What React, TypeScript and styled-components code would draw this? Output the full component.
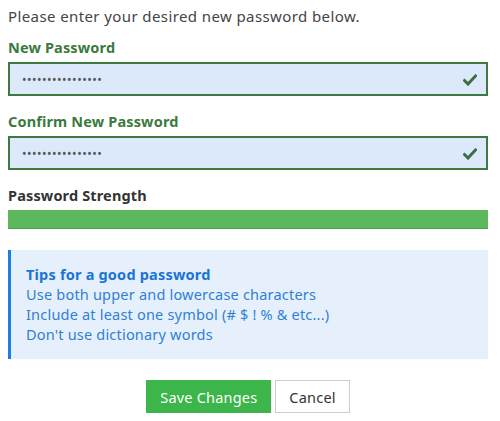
import React from 'react';
import styled, { createGlobalStyle } from 'styled-components';

const GlobalStyle = createGlobalStyle`
  body {
    margin: 0;
    background: #fff;
    font-family: 'Noto Sans', 'Open Sans', sans-serif;
  }
`;

const Page = styled.div`
  width: 480px;
  padding: 5px 8px 0;
`;

const Intro = styled.p`
  margin: 0 0 10px;
  font-size: 15px;
  line-height: 22px;
  letter-spacing: 0.4px;
  color: #444;
`;

const Label = styled.label<{ $dark?: boolean }>`
  display: block;
  font-size: 14.5px;
  font-weight: 700;
  line-height: 20px;
  letter-spacing: 0.15px;
  color: ${(p) => (p.$dark ? '#333' : '#3b7a3d')};
  margin-bottom: 5px;
`;

const InputWrap = styled.div`
  position: relative;
  margin-bottom: 15px;
`;

const Input = styled.input`
  box-sizing: border-box;
  width: 100%;
  height: 34px;
  padding: 0 36px 0 12px;
  border: 2px solid #3e7a40;
  background: #dbe9fb;
  font-family: inherit;
  font-size: 12px;
  letter-spacing: 0.5px;
  color: #555;
  outline: none;
`;

const Check = styled.svg`
  position: absolute;
  right: 11px;
  top: 12px;
  width: 14px;
  height: 12px;
`;

const Bar = styled.div`
  height: 18px;
  background: #5cb85c;
  border-bottom: 1px solid #4d9a4d;
  margin-bottom: 21px;
`;

const Tips = styled.div`
  background: #e6f0fc;
  border-left: 3px solid #1a7fe0;
  padding: 14px 0 15px 15px;
  color: #2f7fd8;
  font-size: 14.5px;
  line-height: 20px;
  letter-spacing: 0.2px;
`;

const TipsTitle = styled.div`
  font-weight: 700;
  color: #1a73d6;
`;

const Actions = styled.div`
  display: flex;
  justify-content: center;
  gap: 4px;
  margin-top: 21px;
`;

const Button = styled.button<{ $primary?: boolean }>`
  height: 33px;
  padding: 0 13px;
  font-family: inherit;
  font-size: 14.5px;
  letter-spacing: 0.2px;
  border: 1px solid ${(p) => (p.$primary ? '#3cb54a' : '#ccc')};
  background: ${(p) => (p.$primary ? '#3cb54a' : '#fff')};
  color: ${(p) => (p.$primary ? '#fff' : '#333')};
  cursor: pointer;
`;

function CheckIcon() {
  return (
    <Check viewBox="0 0 14 12">
      <path d="M1.5 6.5 L5 10 L12.5 2" fill="none" stroke="#3e6e45" strokeWidth="3" strokeLinejoin="miter" strokeLinecap="square" />
    </Check>
  );
}

function App() {
  return (
    <Page>
      <GlobalStyle />
      <Intro>Please enter your desired new password below.</Intro>
      <Label>New Password</Label>
      <InputWrap>
        <Input type="password" defaultValue="secretpassword12" readOnly />
        <CheckIcon />
      </InputWrap>
      <Label>Confirm New Password</Label>
      <InputWrap>
        <Input type="password" defaultValue="secretpassword12" readOnly />
        <CheckIcon />
      </InputWrap>
      <Label $dark>Password Strength</Label>
      <Bar />
      <Tips>
        <TipsTitle>Tips for a good password</TipsTitle>
        <div>Use both upper and lowercase characters</div>
        <div>Include at least one symbol (# $ ! % &amp; etc...)</div>
        <div>Don't use dictionary words</div>
      </Tips>
      <Actions>
        <Button $primary>Save Changes</Button>
        <Button>Cancel</Button>
      </Actions>
    </Page>
  );
}

export default App;
